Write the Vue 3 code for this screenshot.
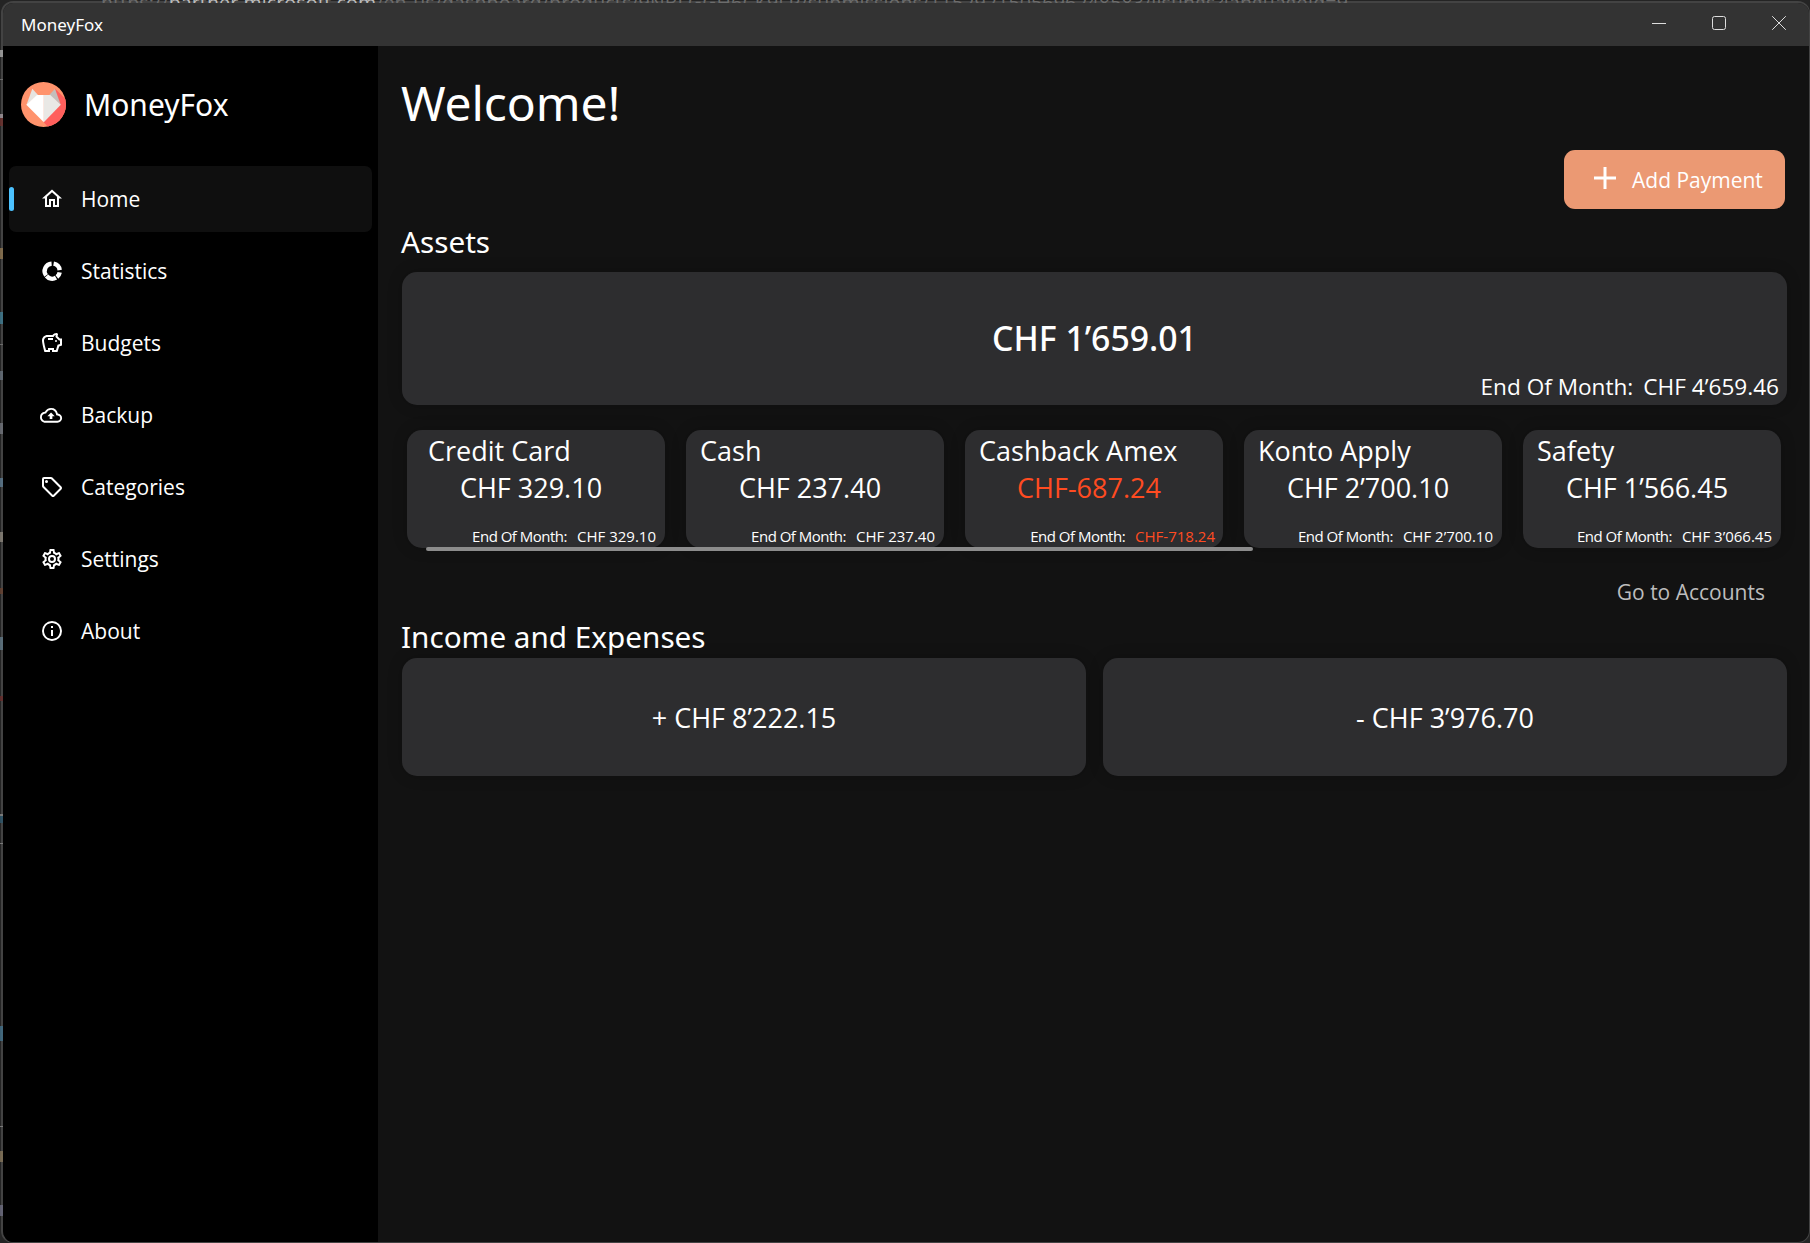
<script setup>
const nav = [
  { name: 'Home', icon: 'home' },
  { name: 'Statistics', icon: 'chart' },
  { name: 'Budgets', icon: 'pig' },
  { name: 'Backup', icon: 'cloud' },
  { name: 'Categories', icon: 'tag' },
  { name: 'Settings', icon: 'gear' },
  { name: 'About', icon: 'info' },
]
const accounts = [
  { name: 'Credit Card', amount: 'CHF 329.10', end: 'CHF 329.10', pad: true },
  { name: 'Cash', amount: 'CHF 237.40', end: 'CHF 237.40' },
  { name: 'Cashback Amex', amount: 'CHF-687.24', end: 'CHF-718.24', negative: true },
  { name: 'Konto Apply', amount: 'CHF 2’700.10', end: 'CHF 2’700.10' },
  { name: 'Safety', amount: 'CHF 1’566.45', end: 'CHF 3’066.45' },
]
// slivers of the window behind, visible along the left edge
const slivers = [
  { y: 50, h: 7, c: '#aaa' }, { y: 79, h: 1, c: '#777' }, { y: 114, h: 4, c: '#a49aa0' },
  { y: 118, h: 8, c: '#6e302c' }, { y: 248, h: 11, c: '#8f7550' }, { y: 312, h: 12, c: '#3f7c92' },
  { y: 344, h: 1, c: '#777' }, { y: 371, h: 9, c: '#66717c' }, { y: 423, h: 11, c: '#70747c' },
  { y: 478, h: 9, c: '#5b7990' }, { y: 532, h: 10, c: '#8b857a' }, { y: 588, h: 6, c: '#68412f' },
  { y: 637, h: 13, c: '#607886' }, { y: 696, h: 5, c: '#6a2c2a' }, { y: 814, h: 2, c: '#888' },
  { y: 816, h: 7, c: '#2d566c' }, { y: 843, h: 1, c: '#888' }, { y: 1026, h: 15, c: '#42718b' },
  { y: 1126, h: 1, c: '#888' }, { y: 1151, h: 11, c: '#86765a' }, { y: 1205, h: 11, c: '#6b6b80' },
]
</script>

<template>
  <div class="desktop">
    <div class="behind"><div>https://<b>partner.microsoft.com</b>/en-us/dashboard/products/9NBLGGH6CK9LP/submissions/1152921505696248583/listings?languageId=9</div></div>
    <i v-for="s in slivers" :key="s.y" class="sliver" :style="{ top: s.y + 'px', height: s.h + 'px', background: s.c }"></i>
    <div class="window">
      <header class="titlebar">
        <span class="caption">MoneyFox</span>
        <div class="controls">
          <svg width="60" height="44" viewBox="0 0 60 44"><path d="M23 20.5h14" /></svg>
          <svg width="60" height="44" viewBox="0 0 60 44"><rect x="23.5" y="13.5" width="13" height="13" rx="2" /></svg>
          <svg width="60" height="44" viewBox="0 0 60 44"><path d="M23.2 13.2l13.6 13.6M36.8 13.2L23.2 26.8" /></svg>
        </div>
      </header>
      <div class="body">
        <aside class="sidebar">
          <div class="brand">
            <svg width="45" height="45" viewBox="0 0 45 45">
              <defs><clipPath id="disc"><circle cx="22.5" cy="22.5" r="22.5" /></clipPath></defs>
              <g clip-path="url(#disc)">
                <rect width="45" height="45" fill="#ff936c" />
                <path d="M34 6.5L45 17.5V45H27L22.5 40 35 20z" fill="#ff5f5c" />
                <path d="M11.3 6.8L17 13 5.5 22.7z" fill="#e6e4e1" />
                <path d="M34 6.8L28.3 13 39.7 22.7z" fill="#c4bebb" />
                <path d="M16 13h6.8v27.2L5.3 22.7z" fill="#fff" />
                <path d="M22.8 13h6.5L39.8 22.7 22.8 40.2z" fill="#e9e8e5" />
              </g>
            </svg>
            <span>MoneyFox</span>
          </div>
          <nav>
            <a v-for="item in nav" :key="item.name" class="item" :class="{ active: item.name === 'Home' }">
              <svg class="icon" width="24" height="24" viewBox="0 0 24 24">
                <path v-if="item.icon === 'home'" d="M12 5.2l5 4.5V18h-2v-6H9v6H7V9.7l5-4.5M12 2.5L2 11.5h3V20h6v-6h2v6h6v-8.500h3L12 2.500z" />
                <g v-else-if="item.icon === 'chart'" fill="none" stroke="#fff" stroke-width="4.4">
                  <path d="M13.6 4.700A7.500 7.500 0 0 1 19.700 11.100" />
                  <path d="M19.700 13.400A7.500 7.500 0 0 1 16.900 18" />
                  <path d="M16 18.700A7.500 7.500 0 0 1 6.500 17" />
                  <path d="M6.100 16.500A7.500 7.500 0 0 1 11.600 4.600" />
                </g>
                <path v-else-if="item.icon === 'pig'" d="M15 10a1 1 0 1 1 2 0 1 1 0 0 1-2 0M8 9h5V7H8v2m14-1.500v6.970l-2.820.930L17.500 21H12v-2h-2v2H4.500C4.500 21 2 12.540 2 9.500 2 6.460 4.460 4 7.500 4h5c.910-1.210 2.360-2 4-2 .830 0 1.500.670 1.500 1.500 0 .210-.040.410-.120.590-.140.340-.260.730-.320 1.140l2.270 2.270H22m-2 2h-1L15.500 6c0-.650.090-1.290.260-1.910-.970.250-1.760.970-2.090 1.910H7.500C5.570 6 4 7.570 4 9.500c0 1.880 1.220 6.650 2.010 9.500H8v-2h6v2h2.010l1.550-5.150 2.440-.820V9.500z" />
                <path v-else-if="item.icon === 'cloud'" transform="translate(0 1.300) scale(.92)" d="M19.350 10.040A7.490 7.490 0 0 0 12 4C9.110 4 6.600 5.640 5.350 8.040A5.994 5.994 0 0 0 0 14c0 3.310 2.690 6 6 6h13c2.760 0 5-2.240 5-5 0-2.640-2.050-4.780-4.650-4.960M19 18H6c-2.210 0-4-1.790-4-4 0-2.050 1.530-3.760 3.560-3.970l1.070-.110.500-.950A5.469 5.469 0 0 1 12 6c2.620 0 4.880 1.860 5.390 4.430l.300 1.500 1.530.110A2.980 2.980 0 0 1 22 15c0 1.650-1.350 3-3 3M8 13h2.550v3h2.900v-3H16l-4-4z" />
                <path v-else-if="item.icon === 'tag'" d="M21.410 11.580l-9-9A2 2 0 0 0 11 2H4a2 2 0 0 0-2 2v7a2 2 0 0 0 .590 1.420l9 9A2 2 0 0 0 13 22a2 2 0 0 0 1.410-.590l7-7A2 2 0 0 0 22 13a2 2 0 0 0-.590-1.420M13 20l-9-9V4h7l9 9M6.500 5A1.500 1.500 0 1 1 5 6.500 1.500 1.500 0 0 1 6.500 5z" />
                <path v-else-if="item.icon === 'gear'" d="M12 8a4 4 0 1 1 0 8 4 4 0 0 1 0-8m0 2a2 2 0 1 0 0 4 2 2 0 0 0 0-4m-2 12c-.250 0-.460-.180-.500-.420l-.370-2.650c-.630-.250-1.170-.590-1.690-.990l-2.490 1.010c-.220.080-.490 0-.610-.220l-2-3.460a.493.493 0 0 1 .120-.640l2.110-1.660L4.500 12l.070-1-2.110-1.630a.493.493 0 0 1-.120-.640l2-3.460c.120-.220.390-.310.610-.220l2.490 1c.520-.390 1.060-.730 1.690-.980l.370-2.650c.040-.240.250-.420.500-.420h4c.250 0 .460.180.500.420l.370 2.650c.630.250 1.170.590 1.690.980l2.490-1c.220-.090.490 0 .610.220l2 3.460c.130.220.070.490-.120.640L19.430 11l.070 1-.070 1 2.110 1.630c.190.150.250.420.120.640l-2 3.460c-.120.220-.390.310-.610.220l-2.490-1c-.520.390-1.060.730-1.690.980l-.370 2.650c-.040.240-.250.420-.500.420h-4m1.250-18l-.370 2.610c-1.200.250-2.260.890-3.030 1.780L5.440 7.350l-.750 1.300L6.800 10.200a5.550 5.550 0 0 0 0 3.600l-2.120 1.560.750 1.300 2.430-1.040c.770.880 1.820 1.520 3.010 1.760l.370 2.620h1.520l.370-2.610c1.190-.250 2.240-.890 3.010-1.770l2.430 1.040.750-1.300-2.120-1.550c.400-1.170.400-2.440 0-3.610l2.110-1.550-.750-1.300-2.410 1.040a5.420 5.420 0 0 0-3.030-1.770L12.750 4z" />
                <path v-else d="M11 9h2V7h-2m1 13c-4.410 0-8-3.590-8-8s3.590-8 8-8 8 3.590 8 8-3.590 8-8 8m0-18a10 10 0 1 0 0 20 10 10 0 0 0 0-20m-1 15h2v-6h-2z" />
              </svg>
              <span>{{ item.name }}</span>
            </a>
          </nav>
        </aside>
        <main>
          <h1>Welcome!</h1>
          <button class="add">
            <svg width="22" height="22" viewBox="0 0 22 22"><path d="M11 0v22M0 11h22" stroke="#fff" stroke-width="3" /></svg>
            <span>Add Payment</span>
          </button>
          <h2 class="h-assets"><span>Assets</span></h2>
          <section class="card total">
            <div class="sum"><span>CHF 1’659.01</span></div>
            <div class="month"><span class="l">End Of Month:</span><span class="v">CHF 4’659.46</span></div>
          </section>
          <section class="accounts">
            <article v-for="a in accounts" :key="a.name" class="card account" :class="{ negative: a.negative, pad: a.pad }">
              <div class="name"><span>{{ a.name }}</span></div>
              <div class="amount"><span>{{ a.amount }}</span></div>
              <div class="eom"><span class="l">End Of Month:</span><span class="v">{{ a.end }}</span></div>
            </article>
            <div class="scroll"></div>
          </section>
          <a class="goto"><span>Go to Accounts</span></a>
          <h2 class="h-income"><span>Income and Expenses</span></h2>
          <section class="flows">
            <div class="card"><span>+ CHF 8’222.15</span></div>
            <div class="card"><span>- CHF 3’976.70</span></div>
          </section>
        </main>
      </div>
    </div>
  </div>
</template>

<style>
body { margin: 0; background: #202020; overflow: hidden; }
</style>

<style scoped>
* { box-sizing: border-box; }
.desktop {
  position: relative;
  width: 1810px;
  height: 1243px;
  padding: 1px 0 0 1px;
  overflow: hidden;
  background: #242424;
  color: #fff;
  font-family: "Open Sans", "Noto Sans", sans-serif;
}
.behind {
  position: absolute;
  z-index: 1;
  left: 101px;
  top: 0;
  height: 3px;
  overflow: hidden;
  font-size: 19.6px;
  line-height: 20px;
  letter-spacing: 0.1px;
  color: #6c6c6c;
  white-space: nowrap;
}
.behind div { margin-top: -7px; }
.behind b { font-weight: 400; color: #bbb; }
.sliver { position: absolute; z-index: 1; left: 0; width: 3px; opacity: 0.8; }
.window {
  position: relative;
  width: 1809px;
  height: 1242px;
  border: 2px solid #434343;
  border-right-width: 1px;
  border-bottom-width: 1px;
  border-radius: 12px;
  overflow: hidden;
  background: #121212;
}
.titlebar {
  display: flex;
  justify-content: space-between;
  height: 43px;
  padding-left: 18px;
  background: #333;
}
.caption { font: 17px/43px "Noto Sans", sans-serif; }
.controls { display: flex; }
.controls svg { fill: none; stroke: #ddd; stroke-width: 1; }
.body { display: flex; height: 1196px; }
.sidebar { width: 375px; background: #000; padding: 36px 6px 0; }
.brand { display: flex; align-items: center; height: 45px; padding-left: 12px; margin-bottom: 39px; }
.brand span { margin-left: 18px; font: 30px/45px "Noto Sans", sans-serif; }
.item {
  position: relative;
  display: flex;
  align-items: center;
  width: 363px;
  height: 66px;
  margin-bottom: 6px;
  padding-left: 31px;
  border-radius: 7px;
  font-size: 21px;
}
.item.active { background: #0f0f0f; }
.item.active::before {
  content: "";
  position: absolute;
  left: 0;
  top: 21px;
  width: 5px;
  height: 24px;
  border-radius: 3px;
  background: #4cc2ff;
}
.icon { fill: #fff; }
.item span { margin-left: 17px; }
main { display: flex; flex-direction: column; width: 1431px; padding: 20px 0 0 23px; }
h1, h2 { margin: 0; font-weight: 400; font-family: "Noto Sans", sans-serif; white-space: nowrap; }
h1 { height: 84px; font-size: 48px; line-height: 74px; letter-spacing: -0.1px; }
.add {
  display: flex;
  align-items: center;
  align-self: flex-end;
  width: 221px;
  height: 59px;
  margin-right: 24px;
  padding: 0 0 0 30px;
  border: 0;
  border-radius: 11px;
  background: #eb9973;
  color: #fff;
  font: 21px "Open Sans", sans-serif;
  white-space: nowrap;
}
.add svg { margin-top: -4px; }
.add span { margin-left: 16px; }
.h-assets { height: 63px; font-size: 29.7px; line-height: 66px; }
.card { background: #2d2d2f; border-radius: 15px; box-shadow: 0 0 15px rgba(0, 0, 0, 0.2); }
.total { width: 1385px; height: 133px; margin-left: 1px; padding-top: 39px; }
.sum { height: 58px; text-align: center; font: 500 33.8px/55px "Noto Sans", sans-serif; }
.month { display: flex; justify-content: flex-end; font-size: 22.6px; line-height: 36px; padding-right: 8px; }
.month .v { margin-left: 10px; }
.accounts { position: relative; display: flex; gap: 21px; padding: 25px 0 0 6px; }
.account { width: 258px; height: 118px; padding-top: 3px; white-space: nowrap; }
.name { height: 37px; padding-left: 14px; font-size: 27px; line-height: 36px; }
.pad .name { padding-left: 21px; }
.amount { height: 37px; width: 248px; text-align: center; font-size: 27px; line-height: 36px; }
.eom { display: flex; justify-content: flex-end; padding-right: 9px; font-size: 15px; line-height: 58px; }
.eom .l { font-weight: 500; letter-spacing: -0.5px; }
.eom .v { margin-left: 10px; }
.negative .eom { padding-right: 8px; }
.negative .amount, .negative .eom .v { color: #ff4b21; }
.scroll {
  position: absolute;
  left: 25px;
  top: 142px;
  width: 827px;
  height: 4px;
  border-radius: 2px;
  background: #8c8c8c;
}
.goto { align-self: flex-end; height: 67px; margin-right: 44px; font-size: 21px; line-height: 88px; color: #bdbdbd; }
.h-income { height: 43px; font-size: 29.7px; line-height: 44px; }
.flows { display: flex; gap: 17px; width: 1385px; margin-left: 1px; }
.flows .card { width: 684px; height: 118px; text-align: center; font-size: 27px; line-height: 120px; }
</style>
